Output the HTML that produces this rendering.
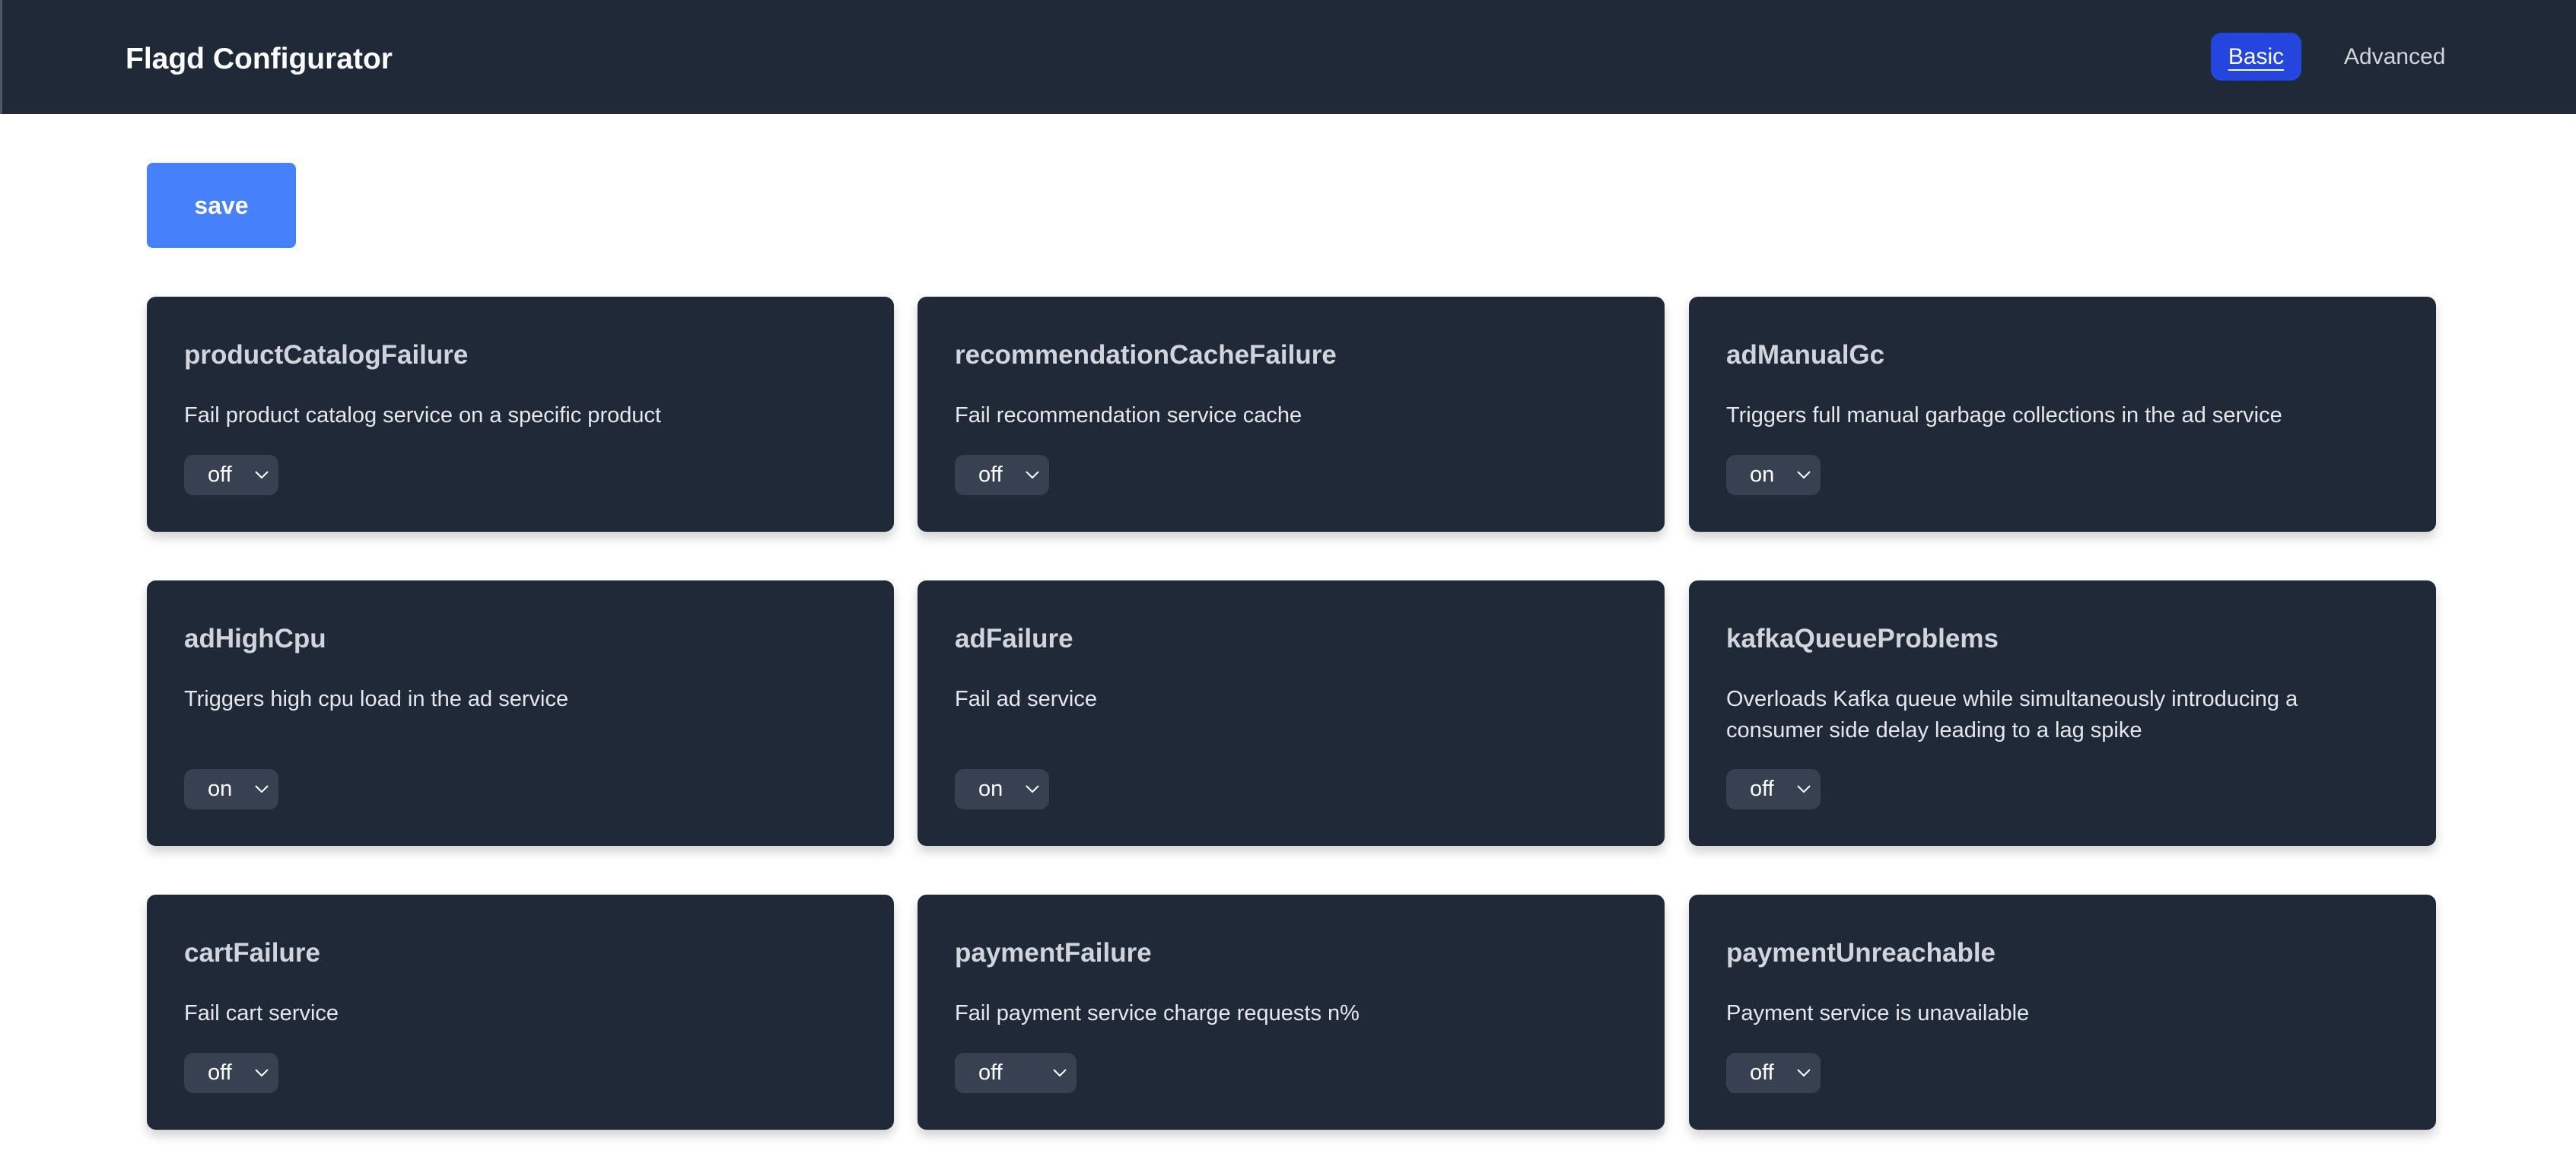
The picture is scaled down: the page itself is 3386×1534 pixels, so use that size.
<!DOCTYPE html>
<html><head><meta charset="utf-8"><style>
*{box-sizing:border-box;margin:0;padding:0}
body{width:3386px;height:1534px;background:#fff;font-family:"Liberation Sans",Arial,sans-serif;position:relative;overflow:hidden}
.hdr{position:absolute;left:0;top:0;width:3386px;height:150px;background:#1f2937;border-left:3px solid #4b5563}
.brand{position:absolute;left:162px;top:55px;font-size:39px;font-weight:bold;color:#fff;line-height:46px}
.basic{position:absolute;left:2903px;top:43px;width:119px;height:63px;background:#2446de;border-radius:14px;color:#fff;font-size:30px;text-align:center;line-height:63px}
.basic span{text-decoration:underline;text-underline-offset:7px;text-decoration-thickness:2px}
.adv{position:absolute;left:3078px;top:43px;line-height:63px;font-size:30px;color:#d1d5db}
.save{position:absolute;left:193px;top:214px;width:196px;height:112px;background:#4680fb;border-radius:8px;color:#fff;font-size:32px;font-weight:bold;text-align:center;line-height:112px}
.card{position:absolute;width:982px;background:#1f2937;border-radius:12px;box-shadow:0 8px 14px rgba(0,0,0,.18);padding:0 49px}
.t{position:absolute;left:49px;top:49px;font-size:35px;font-weight:bold;color:#d1d5db;line-height:56px}
.d{position:absolute;left:49px;top:136px;font-size:29px;color:#e5e7eb;line-height:41px;width:840px}
.s{position:absolute;left:49px;bottom:48px;height:53px;width:124px;background:#374151;border-radius:12px;color:#fff;font-size:29px;line-height:53px;padding-left:31px}
.s.w{width:160px}
.s svg{position:absolute;right:12px;top:20px}
</style></head><body>
<div class="hdr"><div class="brand">Flagd Configurator</div><div class="basic"><span>Basic</span></div><div class="adv">Advanced</div></div>
<div class="save">save</div>

<div class="card" style="left:193px;top:390px;height:309px"><div class="t">productCatalogFailure</div><div class="d">Fail product catalog service on a specific product</div><div class="s">off<svg width="20" height="12" viewBox="0 0 20 12"><path d="M2 2l8 8 8-8" stroke="#fff" stroke-width="2" fill="none"/></svg></div></div>
<div class="card" style="left:1206px;top:390px;height:309px"><div class="t">recommendationCacheFailure</div><div class="d">Fail recommendation service cache</div><div class="s">off<svg width="20" height="12" viewBox="0 0 20 12"><path d="M2 2l8 8 8-8" stroke="#fff" stroke-width="2" fill="none"/></svg></div></div>
<div class="card" style="left:2220px;top:390px;height:309px"><div class="t">adManualGc</div><div class="d">Triggers full manual garbage collections in the ad service</div><div class="s">on<svg width="20" height="12" viewBox="0 0 20 12"><path d="M2 2l8 8 8-8" stroke="#fff" stroke-width="2" fill="none"/></svg></div></div>

<div class="card" style="left:193px;top:763px;height:349px"><div class="t">adHighCpu</div><div class="d">Triggers high cpu load in the ad service</div><div class="s">on<svg width="20" height="12" viewBox="0 0 20 12"><path d="M2 2l8 8 8-8" stroke="#fff" stroke-width="2" fill="none"/></svg></div></div>
<div class="card" style="left:1206px;top:763px;height:349px"><div class="t">adFailure</div><div class="d">Fail ad service</div><div class="s">on<svg width="20" height="12" viewBox="0 0 20 12"><path d="M2 2l8 8 8-8" stroke="#fff" stroke-width="2" fill="none"/></svg></div></div>
<div class="card" style="left:2220px;top:763px;height:349px"><div class="t">kafkaQueueProblems</div><div class="d">Overloads Kafka queue while simultaneously introducing a consumer side delay leading to a lag spike</div><div class="s">off<svg width="20" height="12" viewBox="0 0 20 12"><path d="M2 2l8 8 8-8" stroke="#fff" stroke-width="2" fill="none"/></svg></div></div>

<div class="card" style="left:193px;top:1176px;height:309px"><div class="t">cartFailure</div><div class="d">Fail cart service</div><div class="s">off<svg width="20" height="12" viewBox="0 0 20 12"><path d="M2 2l8 8 8-8" stroke="#fff" stroke-width="2" fill="none"/></svg></div></div>
<div class="card" style="left:1206px;top:1176px;height:309px"><div class="t">paymentFailure</div><div class="d">Fail payment service charge requests n%</div><div class="s w">off<svg width="20" height="12" viewBox="0 0 20 12"><path d="M2 2l8 8 8-8" stroke="#fff" stroke-width="2" fill="none"/></svg></div></div>
<div class="card" style="left:2220px;top:1176px;height:309px"><div class="t">paymentUnreachable</div><div class="d">Payment service is unavailable</div><div class="s">off<svg width="20" height="12" viewBox="0 0 20 12"><path d="M2 2l8 8 8-8" stroke="#fff" stroke-width="2" fill="none"/></svg></div></div>
</body></html>
